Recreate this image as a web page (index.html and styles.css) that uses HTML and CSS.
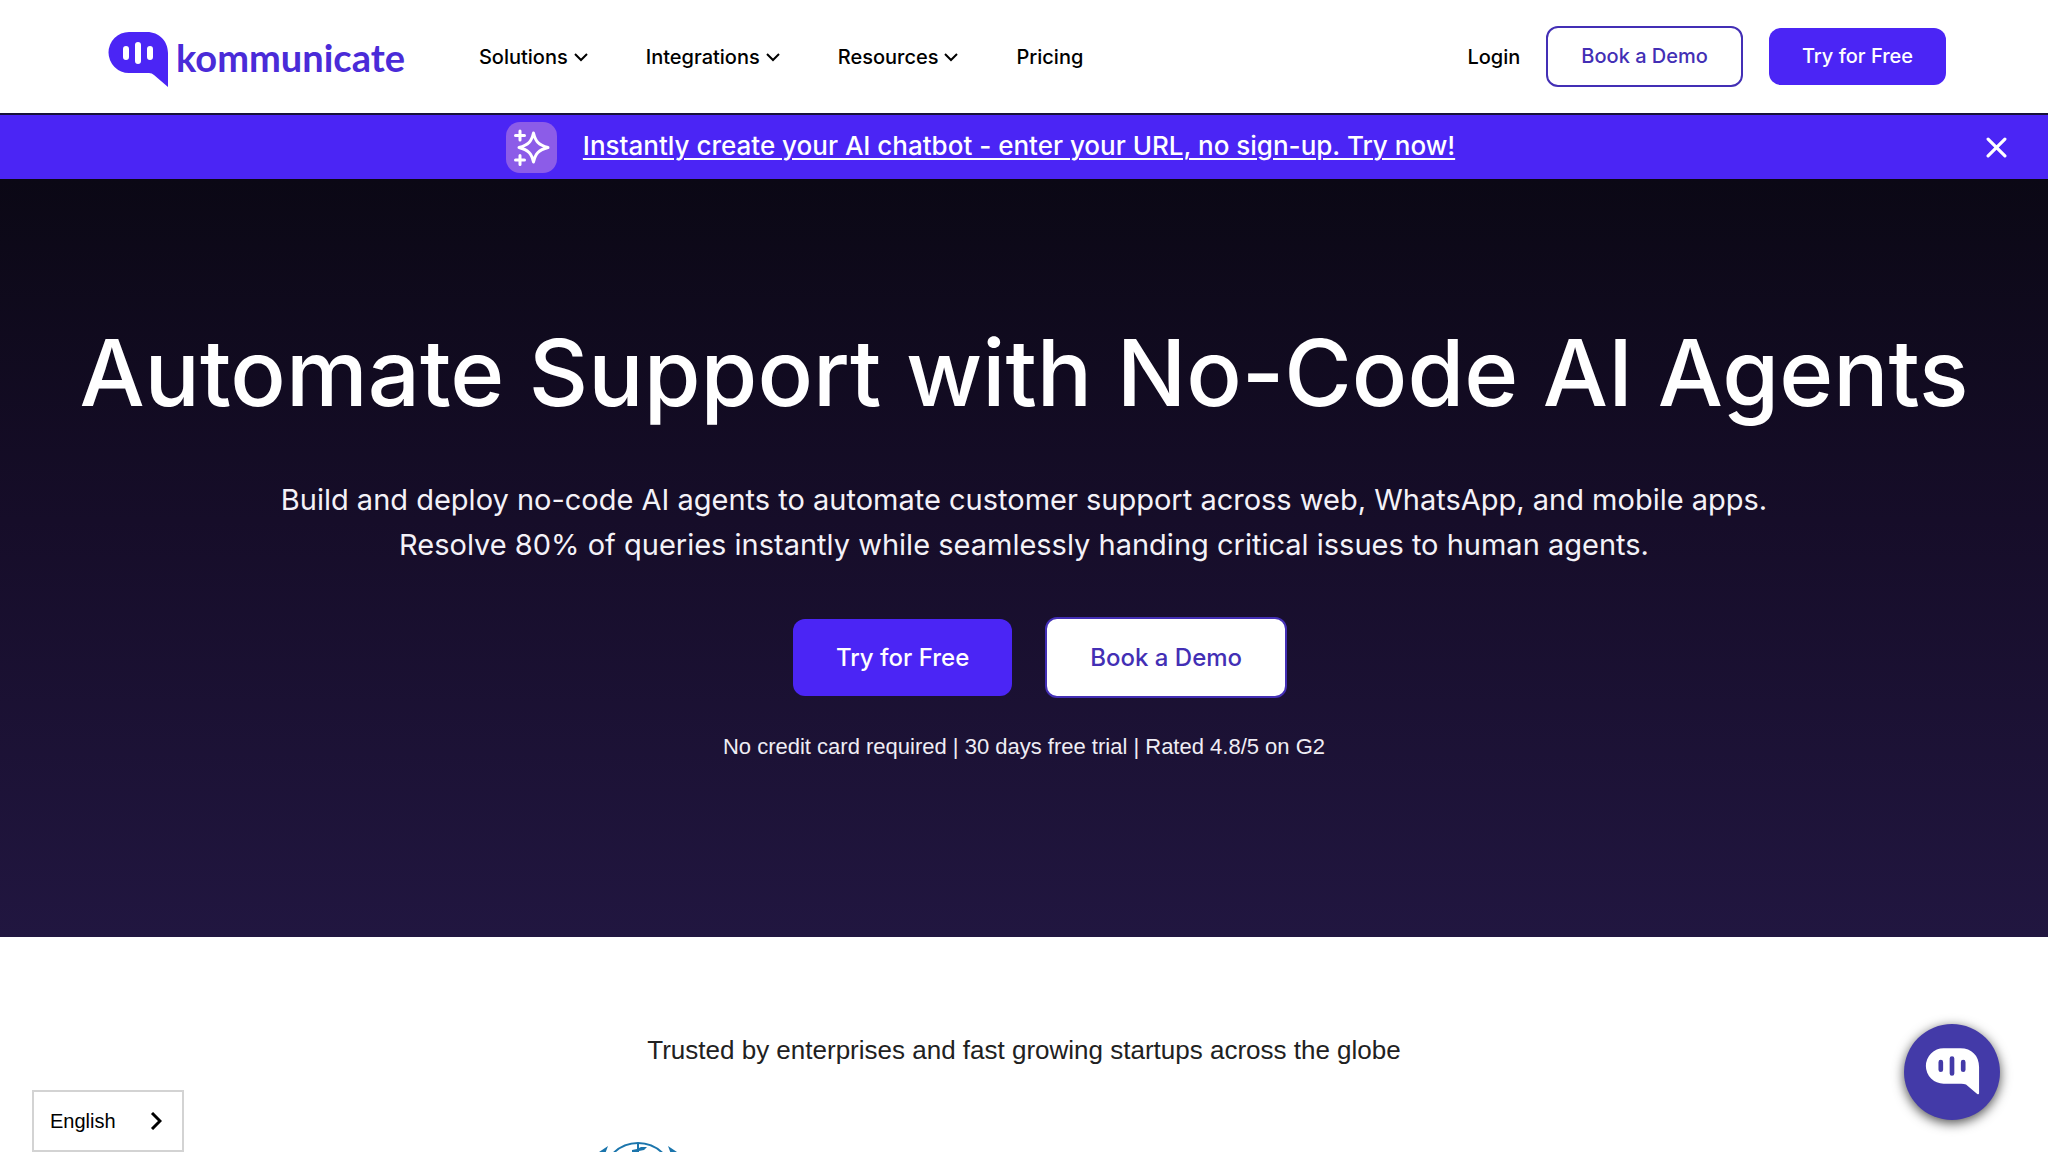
FILE: index.html
```html
<!DOCTYPE html>
<html lang="en">
<head>
    <meta charset="UTF-8">
    <meta name="viewport" content="width=device-width, initial-scale=1.0">
    <title>Kommunicate</title>
    <link rel="stylesheet" href="styles.css">
</head>
<body>
    <header class="header">
        <a class="logo" href="#">
            <svg class="logo-mark" viewBox="0 0 60 55" aria-hidden="true">
                <path fill="#4b25f5" d="M21 0h18c12 0 21 9 21 21v34L46 43q-2-2-5-2H21a20.500 20.500 0 0 1 0-41z"/>
                <path stroke="#fff" stroke-width="6" stroke-linecap="round" d="M18 17v8M30 13v16M42 17v8"/>
            </svg>
            <span class="logo-text">kommunicate</span>
        </a>
        <nav class="nav">
            <button class="nav-item" type="button">Solutions
                <svg class="caret" viewBox="0 0 14 10" aria-hidden="true"><path d="M1 2l6 6 6-6"/></svg>
            </button>
            <button class="nav-item" type="button">Integrations
                <svg class="caret" viewBox="0 0 14 10" aria-hidden="true"><path d="M1 2l6 6 6-6"/></svg>
            </button>
            <button class="nav-item" type="button">Resources
                <svg class="caret" viewBox="0 0 14 10" aria-hidden="true"><path d="M1 2l6 6 6-6"/></svg>
            </button>
            <a class="nav-item" href="#">Pricing</a>
        </nav>
        <div class="header-actions">
            <a class="login" href="#">Login</a>
            <a class="btn btn-outline" href="#">Book a Demo</a>
            <a class="btn btn-primary" href="#">Try for Free</a>
        </div>
    </header>

    <div class="banner">
        <div class="banner-content">
            <span class="banner-icon">
                <svg viewBox="0 0 51 51" aria-hidden="true">
                    <path stroke-width="3" d="M27.500 11c2 8.500 5 12 14.500 14.500-9.500 2.500-12.500 6-14.500 14.500-2-8.500-5-12-14.500-14.500 9.500-2.500 12.500-6 14.500-14.500z"/>
                    <path stroke-width="3" d="M14 9v9M9.500 13.500h9M14 33.500v9M9.500 38h9"/>
                </svg>
            </span>
            <a class="banner-link" href="#">Instantly create your AI chatbot - enter your URL, no sign-up. Try now!</a>
        </div>
        <button class="banner-close" type="button" aria-label="Close">
            <svg viewBox="0 0 20 20" aria-hidden="true"><path d="M2 2l16 16M18 2L2 18"/></svg>
        </button>
    </div>

    <main>
        <section class="hero">
            <h1>Automate Support with No-Code AI Agents</h1>
            <p class="subtitle">
                Build and deploy no-code AI agents to automate customer support across web, WhatsApp, and mobile apps.<br>
                Resolve 80% of queries instantly while seamlessly handing critical issues to human agents.
            </p>
            <div class="hero-actions">
                <a class="btn btn-large btn-primary" href="#">Try for Free</a>
                <a class="btn btn-large btn-outline" href="#">Book a Demo</a>
            </div>
            <p class="note">No credit card required | 30 days free trial | Rated 4.8/5 on G2</p>
        </section>

        <section class="trusted">
            <h2>Trusted by enterprises and fast growing startups across the globe</h2>
            <div class="clients">
                <!-- round emblem with laurel branches -->
                <svg class="emblem" viewBox="0 0 84 84" aria-hidden="true">
                    <g fill="none" stroke="#1b75ac" stroke-width="2">
                        <circle cx="42" cy="37" r="35"/>
                        <circle cx="42" cy="37" r="23"/>
                        <path d="M42 2v70M7 37h70"/>
                    </g>
                    <g fill="#1b75ac">
                        <path d="M36 9l5-1 4-2 6 0-3 3-5 1-2 4-5-1zM12 5L3 11 0 20 9 13zM72 5l9 6 3 9-9-7z"/>
                    </g>
                </svg>
            </div>
        </section>
    </main>

    <button class="language" type="button">English
        <svg viewBox="0 0 12 18" aria-hidden="true"><path d="M2 1l8 8-8 8"/></svg>
    </button>

    <button class="chat" type="button" aria-label="Open chat">
        <svg viewBox="0 0 60 55" aria-hidden="true">
            <path fill="#fff" d="M21 2h18c12 0 20 8 20 20v28q0 2-2 1L45 41q-2-1-5-1H21a19 19 0 0 1 0-38z"/>
            <path stroke="#433aa8" stroke-width="5" stroke-linecap="round" d="M18 17v8M30 13v16M42 17v8"/>
        </svg>
    </button>
</body>
</html>
```
FILE: styles.css
```css
:root {
    --brand: #4b25f5;
    --brand-dark: #432fb5;
}

* {
    box-sizing: border-box;
}

body {
    margin: 0;
    height: 100vh;
    overflow: hidden;
    background: #fff;
    color: #000;
    font-family: Inter, "Liberation Sans", sans-serif;
}

a {
    color: inherit;
    text-decoration: none;
}

button {
    font: inherit;
    color: inherit;
    background: none;
    border: 0;
    padding: 0;
    cursor: pointer;
}

svg {
    display: block;
    fill: none;
}

/* Header */
.header {
    display: flex;
    align-items: center;
    height: 115px;
    padding: 0 102px 0 108px;
    border-bottom: 2px solid #17123a;
}

.logo {
    display: flex;
    align-items: center;
    gap: 8px;
}

.logo-mark {
    width: 60px;
    height: 55px;
    margin-top: 6px;
}

.logo-text {
    color: #4a2bd8;
    font-family: Lato, sans-serif;
    font-size: 38px;
    font-weight: 700;
    line-height: 40px;
}

.nav {
    display: flex;
    align-items: center;
    gap: 58px;
    margin-left: 74px;
}

.nav-item {
    display: flex;
    align-items: center;
    gap: 6px;
    font-size: 20px;
    font-weight: 500;
    line-height: 28px;
}

.caret {
    width: 14px;
    height: 10px;
    stroke: #000;
    stroke-width: 2;
}

.header-actions {
    display: flex;
    align-items: center;
    gap: 26px;
    margin-left: auto;
    font-size: 20px;
    font-weight: 500;
}

.btn {
    padding: 15px 33px;
    border-radius: 12px;
    font-size: 20px;
    font-weight: 500;
    line-height: 27px;
}

.btn-primary {
    background: var(--brand);
    color: #fff;
}

.btn-outline {
    border: 2px solid var(--brand-dark);
    background: #fff;
    color: var(--brand-dark);
}

.btn-large {
    padding: 22px 43px;
    font-size: 24px;
    line-height: 33px;
}

/* Announcement bar */
.banner {
    display: flex;
    align-items: center;
    height: 64px;
    padding-right: 41px;
    background: var(--brand);
    color: #fff;
}

.banner-content {
    display: flex;
    flex: 1;
    align-items: center;
    justify-content: center;
    gap: 26px;
}

.banner-icon {
    width: 51px;
    height: 51px;
    border-radius: 14px;
    background: #8c5ce8;
}

.banner-icon svg {
    stroke: #fff;
    stroke-linecap: round;
    stroke-linejoin: round;
}

.banner-link {
    font-size: 26px;
    font-weight: 500;
    line-height: 32px;
    padding-bottom: 2px;
    text-decoration: underline;
    text-underline-offset: 3px;
    text-decoration-thickness: 2px;
}

.banner-close {
    padding-left: 25px;
}

.banner-close svg {
    width: 21px;
    height: 21px;
    stroke: #fff;
    stroke-width: 3;
    stroke-linecap: round;
}

/* Hero */
.hero {
    height: 758px;
    padding-top: 136px;
    background: linear-gradient(#0b0815, #160d29 45%, #211640);
    color: #fff;
    text-align: center;
}

.hero h1 {
    margin: 0;
    font-size: 92px;
    font-weight: 500;
    line-height: 116px;
}

.subtitle {
    margin: 46px 0 0;
    color: #f4f2f8;
    font-size: 29px;
    line-height: 45px;
}

.hero-actions {
    display: flex;
    align-items: center;
    justify-content: center;
    gap: 33px;
    margin-top: 50px;
    padding-left: 32px;
}

.note {
    margin: 35px 0 0;
    color: #efedf4;
    font-family: "Liberation Sans", sans-serif;
    font-size: 22px;
    line-height: 28px;
}

/* Trusted by */
.trusted {
    padding-top: 97px;
    text-align: center;
}

.trusted h2 {
    margin: 0;
    color: #212121;
    font-family: "Liberation Sans", sans-serif;
    font-size: 26px;
    font-weight: 400;
    line-height: 32px;
}

.clients {
    display: flex;
    margin-top: 75px;
    padding-left: 596px;
}

.emblem {
    width: 84px;
    height: 84px;
}

/* Floating widgets */
.language {
    position: fixed;
    left: 32px;
    bottom: 0;
    display: flex;
    align-items: center;
    justify-content: space-between;
    width: 152px;
    height: 62px;
    padding: 0 20px 0 16px;
    border: 2px solid #d3d3d3;
    background: #fff;
    font-family: "Liberation Sans", sans-serif;
    font-size: 20px;
}

.language svg {
    width: 12px;
    height: 18px;
    stroke: #000;
    stroke-width: 3;
}

.chat {
    position: fixed;
    right: 48px;
    bottom: 32px;
    display: flex;
    align-items: center;
    justify-content: center;
    width: 96px;
    height: 96px;
    border-radius: 50%;
    background: #433aa8;
    box-shadow: 0 3px 12px rgba(0, 0, 0, 0.7);
}

.chat svg {
    width: 56px;
    height: 52px;
}
```
